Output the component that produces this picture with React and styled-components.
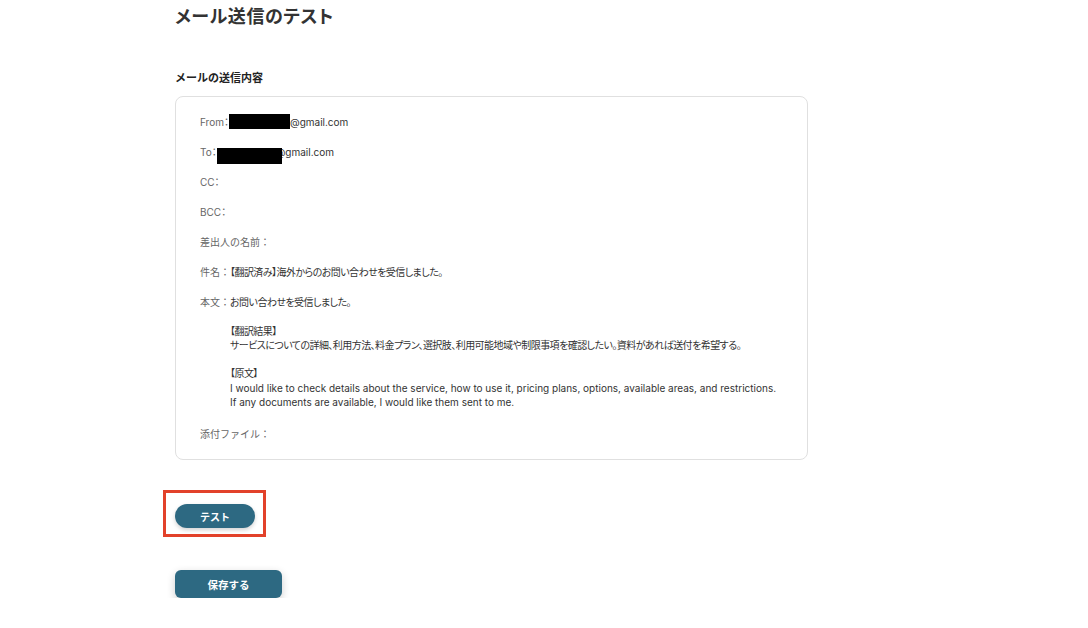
import React from 'react'
import styled, { createGlobalStyle } from 'styled-components'

const GlobalStyle = createGlobalStyle`
  html, body {
    margin: 0;
    padding: 0;
    background: #fff;
  }
  body {
    font-family: "Inter", "Noto Sans CJK JP", sans-serif;
    color: #333;
  }
`

const Page = styled.div`
  padding: 4px 0 0 175px;
  width: 633px;
`

const Title = styled.h1`
  margin: 0;
  font-size: 18px;
  line-height: 26px;
  font-weight: bold;
  color: #333;
  font-feature-settings: "palt";
  letter-spacing: 0.6px;
`

const SectionLabel = styled.div`
  margin-top: 40px;
  font-size: 11px;
  line-height: 16px;
  font-weight: bold;
  color: #222;
`

const Card = styled.div`
  margin-top: 10px;
  border: 1px solid #e0e0e0;
  border-radius: 8px;
  padding: 18px 24px;
  display: flex;
  flex-direction: column;
  gap: 16px;
  font-size: 10px;
  line-height: 14px;
`

const Row = styled.div`
  display: flex;
  align-items: flex-start;
  margin-bottom: ${p => p.$extra || 0}px;
`

const Label = styled.span`
  color: #666;
  white-space: nowrap;
  font-feature-settings: ${p => (p.$latin ? '"palt"' : 'normal')};
`

const Value = styled.div`
  color: #333;
  font-feature-settings: "palt";
  letter-spacing: ${p => (p.$jp ? '-0.55px' : '0')};
`

const Body = styled.div`
  display: flex;
  flex-direction: column;
  gap: 14.3px;
  line-height: 14.3px;
  color: #333;
  font-feature-settings: "palt";
`

const Para = styled.div`
  letter-spacing: ${p => (p.$jp ? '-0.55px' : '0')};
`

const Heading = styled.span`
  letter-spacing: -0.55px;
`

const Redact = styled.span`
  display: inline-block;
  vertical-align: top;
  position: relative;
  background: #000;
  width: ${p => p.$w}px;
  height: ${p => p.$h}px;
  margin-bottom: ${p => 14 - p.$h}px;
  margin-right: ${p => p.$mr || 0}px;
  top: ${p => p.$top}px;
`

const Highlight = styled.div`
  margin: 30px 0 0 -12px;
  width: fit-content;
  border: 3px solid #e2412a;
  padding: 11px 8px 6px 9px;
`

const PillButton = styled.button`
  width: 80px;
  height: 24px;
  border: none;
  border-radius: 12px;
  background: #2d6982;
  color: #fff;
  font-family: inherit;
  font-size: 10px;
  font-weight: bold;
  box-shadow: 0 2px 4px rgba(0, 0, 0, 0.18);
  display: block;
`

const SaveButton = styled.button`
  margin-top: 33px;
  width: 107px;
  height: 28px;
  border: none;
  border-radius: 6px;
  background: #2d6982;
  color: #fff;
  font-family: inherit;
  font-size: 10.5px;
  font-weight: bold;
  box-shadow: 0 3px 8px rgba(0, 0, 0, 0.2);
  display: block;
`

export default function App() {
  return (
    <>
      <GlobalStyle />
      <Page>
        <Title>メール送信のテスト</Title>
        <SectionLabel>メールの送信内容</SectionLabel>
        <Card>
          <Row>
            <Label $latin>From：</Label>
            <Value>
              <Redact $w={61} $h={15} $top={-1} />@gmail.com
            </Value>
          </Row>
          <Row>
            <Label $latin>To：</Label>
            <Value>
              <Redact $w={65} $h={16} $top={3} $mr={-6} />@gmail.com
            </Value>
          </Row>
          <Row>
            <Label $latin>CC：</Label>
          </Row>
          <Row>
            <Label $latin>BCC：</Label>
          </Row>
          <Row>
            <Label>差出人の名前：</Label>
          </Row>
          <Row>
            <Label>件名：</Label>
            <Value $jp>【翻訳済み】海外からのお問い合わせを受信しました。</Value>
          </Row>
          <Row $extra={2}>
            <Label>本文：</Label>
            <Body>
              <Para $jp>お問い合わせを受信しました。</Para>
              <Para $jp>
                【翻訳結果】
                <br />
                サービスについての詳細、利用方法、料金プラン、選択肢、利用可能地域や制限事項を確認したい。資料があれば送付を希望する。
              </Para>
              <Para>
                <Heading>【原文】</Heading>
                <br />
                I would like to check details about the service, how to use it, pricing plans, options, available areas, and restrictions.
                <br />
                If any documents are available, I would like them sent to me.
              </Para>
            </Body>
          </Row>
          <Row>
            <Label>添付ファイル：</Label>
          </Row>
        </Card>
        <Highlight>
          <PillButton>テスト</PillButton>
        </Highlight>
        <SaveButton>保存する</SaveButton>
      </Page>
    </>
  )
}
